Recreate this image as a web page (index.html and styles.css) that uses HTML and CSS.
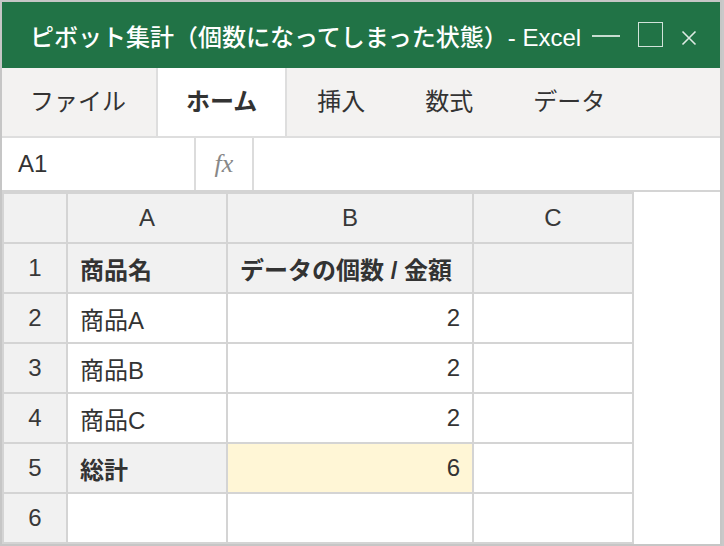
FILE: index.html
```html
<!doctype html>
<html lang="ja">
  <head>
    <meta charset="UTF-8" />
    <title>ピボット集計 - Excel</title>
    <link rel="stylesheet" href="styles.css">
  </head>
  <body>
    <div class="window">
      <div class="title-bar">
        <span class="title">ピボット集計（個数になってしまった状態）- Excel</span>
        <span class="btn-min"></span>
        <span class="btn-max"></span>
        <svg class="btn-close" width="16" height="16" viewBox="0 0 16 16">
          <path d="M1.5 1.5 L14.5 14.5 M14.5 1.5 L1.5 14.5" stroke="currentColor" stroke-width="1.6" fill="none" />
        </svg>
      </div>

      <div class="tabs">
        <div class="tab">ファイル</div>
        <div class="tab active">ホーム</div>
        <div class="tab">挿入</div>
        <div class="tab">数式</div>
        <div class="tab">データ</div>
      </div>

      <div class="formula-bar">
        <div class="name-box">A1</div>
        <div class="fx">fx</div>
        <div class="formula-input"></div>
      </div>

      <div class="sheet">
        <div class="head corner"></div>
        <div class="head">A</div>
        <div class="head">B</div>
        <div class="head">C</div>

        <div class="head">1</div>
        <div class="cell label strong">商品名</div>
        <div class="cell label strong">データの個数 / 金額</div>
        <div class="cell label"></div>

        <div class="head">2</div>
        <div class="cell">商品A</div>
        <div class="cell num">2</div>
        <div class="cell"></div>

        <div class="head">3</div>
        <div class="cell">商品B</div>
        <div class="cell num">2</div>
        <div class="cell"></div>

        <div class="head">4</div>
        <div class="cell">商品C</div>
        <div class="cell num">2</div>
        <div class="cell"></div>

        <div class="head">5</div>
        <div class="cell label strong">総計</div>
        <div class="cell num total">6</div>
        <div class="cell"></div>

        <div class="head">6</div>
        <div class="cell"></div>
        <div class="cell"></div>
        <div class="cell"></div>
      </div>
    </div>
  </body>
</html>
```

FILE: styles.css
```css
* {
  margin: 0;
  padding: 0;
  box-sizing: border-box;
}

body {
  font-family: "Liberation Sans", "Noto Sans CJK JP", sans-serif;
  background: #c9c9c9;
  color: #333;
  width: 724px;
  height: 546px;
  overflow: hidden;
}

.window {
  width: 722px;
  height: 546px;
  border: 2px solid #c6c6c6;
  background: #fff;
}

/* タイトルバー */
.title-bar {
  height: 66px;
  background: #217346;
  color: #fff;
  display: flex;
  align-items: center;
  padding-left: 28px;
}

.title {
  width: 562px;
  font-size: 24px;
  font-weight: 500;
  white-space: nowrap;
}

.btn-min {
  width: 28px;
  height: 2px;
  margin-top: 2px;
  background: rgba(255, 255, 255, 0.75);
}

.btn-max {
  width: 25px;
  height: 25px;
  margin-left: 18px;
  margin-top: -2px;
  border: 1.5px solid rgba(255, 255, 255, 0.8);
}

.btn-close {
  margin-left: 18px;
  margin-top: 6px;
  width: 16px;
  height: 16px;
  color: rgba(255, 255, 255, 0.85);
}

/* リボンのタブ */
.tabs {
  height: 70px;
  display: flex;
  background: #f3f2f1;
  border-bottom: 2px solid #dedede;
}

.tab {
  padding: 0 28px;
  font-size: 24px;
  line-height: 68px;
  color: #333;
  border-left: 2px solid transparent;
  border-right: 2px solid transparent;
}

.tab:first-child {
  border-left: none;
}

.tab.active {
  background: #fff;
  border-color: #dedede;
  font-weight: 700;
}

/* 数式バー */
.formula-bar {
  height: 54px;
  display: flex;
  border-bottom: 2px solid #d4d4d4;
}

.name-box {
  width: 194px;
  padding-left: 16px;
  font-size: 24px;
  line-height: 52px;
  border-right: 2px solid #dcdcdc;
}

.fx {
  width: 58px;
  text-align: center;
  font-family: "Liberation Serif", serif;
  font-style: italic;
  font-size: 26px;
  line-height: 52px;
  color: #888;
  border-right: 2px solid #dcdcdc;
}

.formula-input {
  flex: 1;
}

/* シート */
.sheet {
  display: grid;
  grid-template-columns: 62px 158px 244px 158px;
  grid-auto-rows: 48px;
  gap: 2px;
  padding: 2px;
  width: 632px;
  background: #d4d4d4;
}

.head {
  background: #f1f1f1;
  display: flex;
  align-items: center;
  justify-content: center;
  font-size: 24px;
  color: #383838;
}

.cell {
  background: #fff;
  display: flex;
  align-items: center;
  padding: 0 12px;
  font-size: 24px;
  color: #333;
  white-space: nowrap;
}

.cell.label {
  background: #f1f1f1;
}

.cell.strong {
  font-weight: 700;
}

.cell.num {
  justify-content: flex-end;
}

.cell.total {
  background: #fff6d6;
}
```
